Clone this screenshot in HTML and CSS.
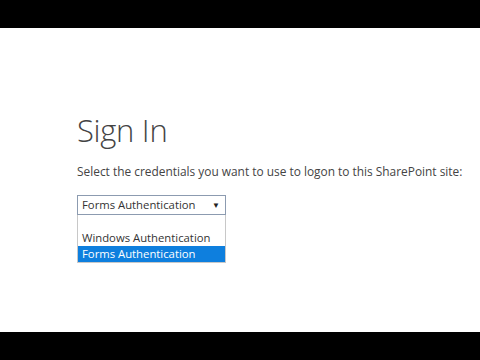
FILE: index.html
```html
<!DOCTYPE html>
<html lang="en">
  <head>
  <link rel="stylesheet" href="styles.css">
  </head>
  <body>
    <div class="bar"></div>
    <div class="page">
      <h1>Sign In</h1>
      <p class="hint">Select the credentials you want to use to logon to this SharePoint site:</p>
      <div class="picker">
        <div class="picker-value">
          <span>Forms Authentication</span>
          <span class="arrow">&#9660;</span>
        </div>
        <ul class="picker-list">
          <li></li>
          <li>Windows Authentication</li>
          <li class="selected">Forms Authentication</li>
        </ul>
      </div>
    </div>
    <div class="bar"></div>
  </body>
</html>
```

FILE: styles.css
```css
html, body { height: 100%; padding: 0; margin: 0; }
body { background: #000; color: #444; font: 13px/1.4 "Open Sans", "Noto Sans", sans-serif; }
.bar { height: 28px; background: #000; }
.page { height: 304px; background: #fff; padding: 0 0 0 77px; box-sizing: border-box; overflow: hidden; }
h1 { margin: 0; padding-top: 82px; font-weight: 300; font-size: 31px; line-height: 40px; color: #444; letter-spacing: -0.3px; }
.hint { margin: 12px 0 0; font-size: 11.9px; line-height: 18px; color: #444; white-space: nowrap; }
.picker { margin-top: 15px; width: 149px; font-size: 11.3px; color: #333; }
.picker-value {
  display: flex; justify-content: space-between; align-items: center;
  height: 20px; box-sizing: border-box; padding: 0 5px 0 4px;
  border: 1px solid #8c9bb0; background: #fff;
}
.arrow { font-size: 8px; color: #222; }
.picker-list {
  list-style: none; margin: 0; padding: 0;
  border: 1px solid #c8c8c8; border-top: none;
}
.picker-list li { height: 16px; line-height: 16px; padding: 0 4px; }
.picker-list li:first-child { height: 15px; }
.picker-list .selected { background: #0e7fde; color: #fff; }
```
